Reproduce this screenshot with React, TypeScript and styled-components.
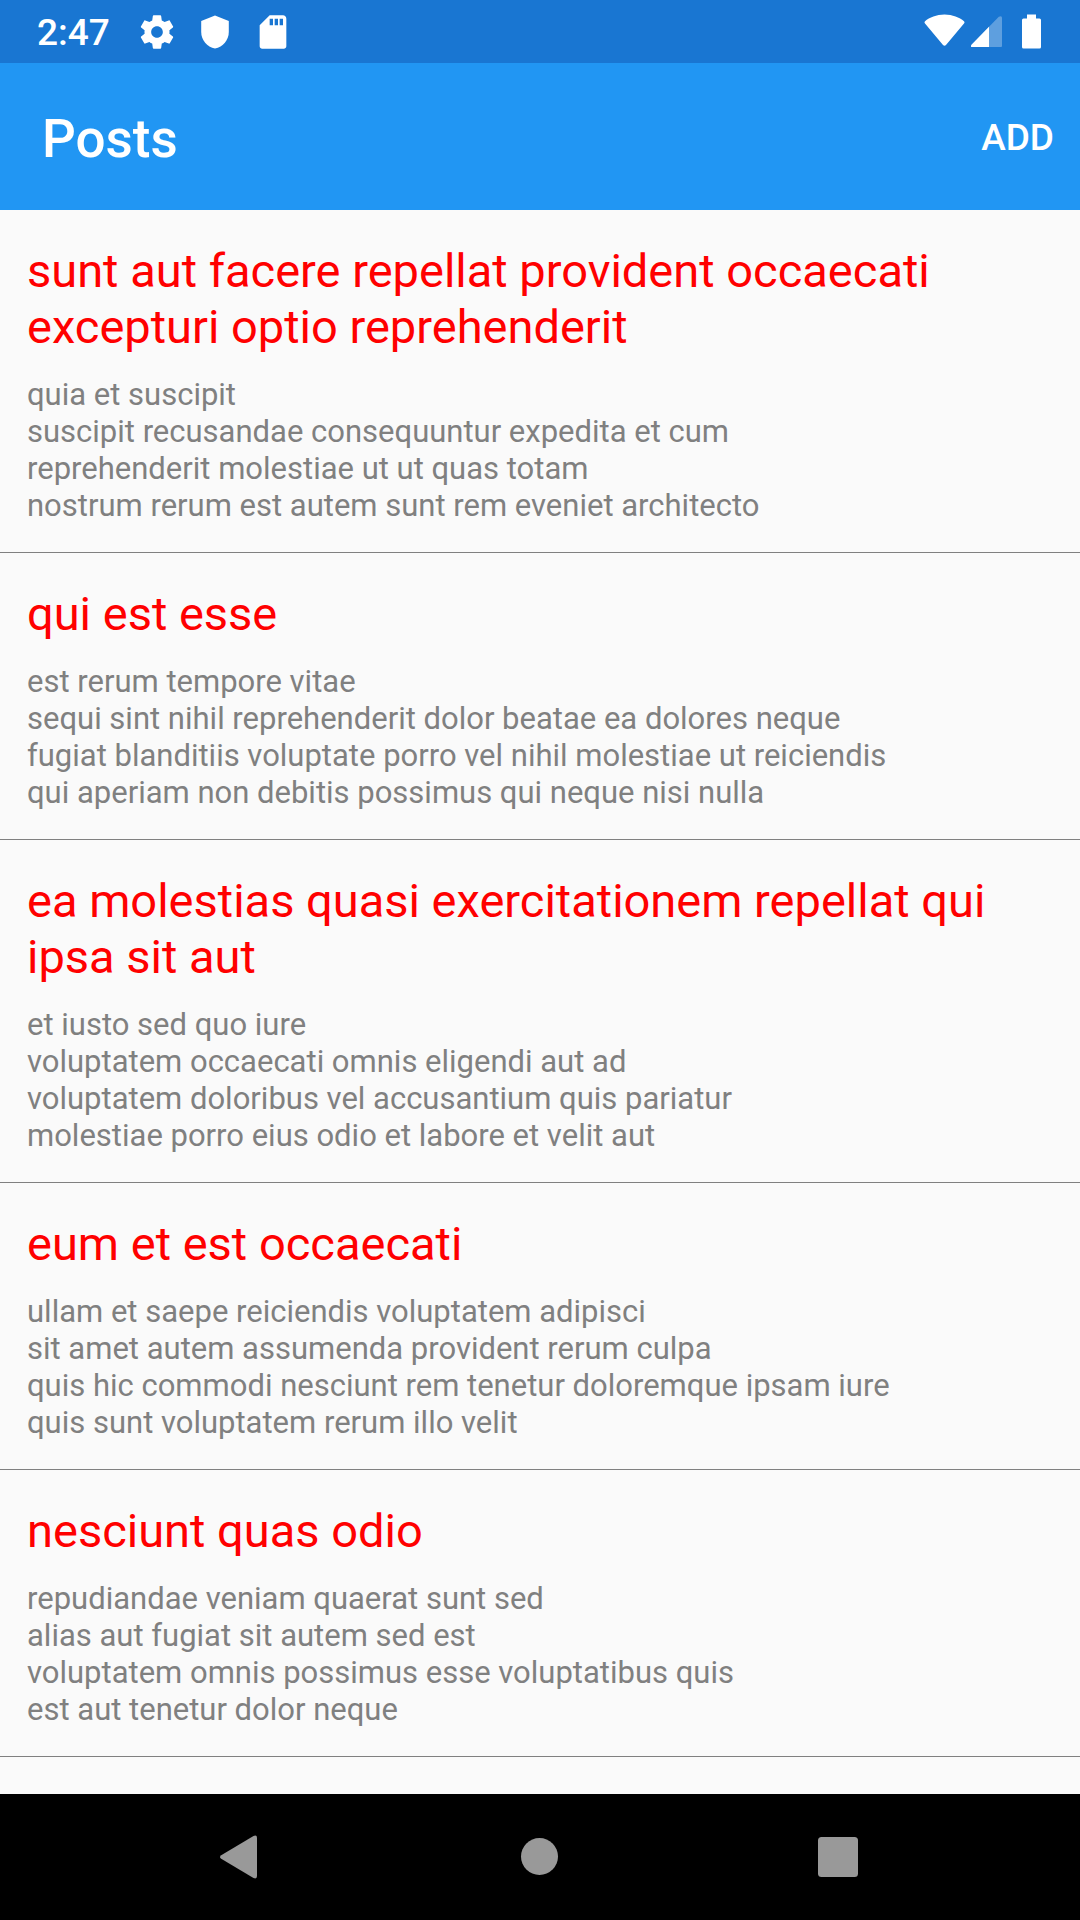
import React from "react";
import styled, { createGlobalStyle } from "styled-components";

const GlobalStyle = createGlobalStyle`
  *, *::before, *::after { box-sizing: border-box; }
  body { margin: 0; background: #fafafa; font-family: Roboto, "Liberation Sans", sans-serif; }
`;

const Screen = styled.div`
  display: flex;
  flex-direction: column;
  height: 100vh;
  overflow: hidden;
`;

const StatusBar = styled.div`
  display: flex;
  align-items: center;
  justify-content: space-between;
  flex: none;
  height: 63px;
  padding: 0 32px 0 37px;
  background: #1976d2;
  color: #fff;
`;

const StatusGroup = styled.div<{ $gap: number }>`
  display: flex;
  align-items: center;
  gap: ${(p) => p.$gap}px;
`;

const Clock = styled.time`
  margin-right: 9px;
  padding-top: 2px;
  font-size: 37px;
  font-weight: 500;
  line-height: 44px;
`;

const Icon = styled.svg`
  display: block;
  flex: none;
  fill: currentColor;
`;

const AppBar = styled.header`
  display: flex;
  align-items: center;
  justify-content: space-between;
  flex: none;
  height: 147px;
  padding: 2px 26px 0 42px;
  background: #2196f3;
  color: #fff;
`;

const Heading = styled.h1`
  margin: 0;
  padding-top: 2px;
  font-size: 53px;
  font-weight: 500;
  line-height: 62px;
`;

const AddButton = styled.button`
  padding: 0;
  border: 0;
  background: none;
  color: inherit;
  font: 500 37px/44px Roboto, "Liberation Sans", sans-serif;
  text-transform: uppercase;
`;

const PostList = styled.main`
  flex: 1;
  min-height: 0;
  overflow: hidden;
  background: #fafafa;
`;

const Post = styled.article`
  display: flex;
  flex-direction: column;
  gap: 21px;
  padding: 33px 27px 28px;
  border-bottom: 1px solid #808080;
`;

const PostTitle = styled.h2`
  margin: 0;
  color: #f00;
  font-size: 47px;
  font-weight: 400;
  line-height: 56px;
`;

const PostBody = styled.p`
  margin: 0;
  color: #808080;
  font-size: 31px;
  line-height: 37px;
  white-space: pre-line;
`;

const NavBar = styled.nav`
  display: flex;
  align-items: center;
  justify-content: center;
  gap: 216px;
  flex: none;
  height: 126px;
  background: #000;
`;

const NavButton = styled.button`
  padding: 0;
  border: 0;
  background: none;
  color: #999;
`;

const posts = [
  {
    title: "sunt aut facere repellat provident occaecati excepturi optio reprehenderit",
    body: "quia et suscipit\nsuscipit recusandae consequuntur expedita et cum\nreprehenderit molestiae ut ut quas totam\nnostrum rerum est autem sunt rem eveniet architecto",
  },
  {
    title: "qui est esse",
    body: "est rerum tempore vitae\nsequi sint nihil reprehenderit dolor beatae ea dolores neque\nfugiat blanditiis voluptate porro vel nihil molestiae ut reiciendis\nqui aperiam non debitis possimus qui neque nisi nulla",
  },
  {
    title: "ea molestias quasi exercitationem repellat qui ipsa sit aut",
    body: "et iusto sed quo iure\nvoluptatem occaecati omnis eligendi aut ad\nvoluptatem doloribus vel accusantium quis pariatur\nmolestiae porro eius odio et labore et velit aut",
  },
  {
    title: "eum et est occaecati",
    body: "ullam et saepe reiciendis voluptatem adipisci\nsit amet autem assumenda provident rerum culpa\nquis hic commodi nesciunt rem tenetur doloremque ipsam iure\nquis sunt voluptatem rerum illo velit",
  },
  {
    title: "nesciunt quas odio",
    body: "repudiandae veniam quaerat sunt sed\nalias aut fugiat sit autem sed est\nvoluptatem omnis possimus esse voluptatibus quis\nest aut tenetur dolor neque",
  },
];

export default function App() {
  return (
    <>
      <GlobalStyle />
      <Screen>
        <StatusBar>
          <StatusGroup $gap={18}>
            <Clock>2:47</Clock>
            <Icon width="40" height="40" viewBox="0 0 24 24" aria-hidden="true">
              <path d="M19.43 12.98c.04-.32.07-.64.07-.98s-.03-.66-.07-.98l2.11-1.65c.19-.15.24-.42.12-.64l-2-3.46c-.12-.22-.39-.3-.61-.22l-2.49 1c-.52-.4-1.08-.73-1.69-.98l-.38-2.65C14.46 2.18 14.25 2 14 2h-4c-.25 0-.46.18-.49.42l-.38 2.65c-.61.25-1.17.59-1.69.98l-2.49-1c-.23-.09-.49 0-.61.22l-2 3.46c-.13.22-.07.49.12.64l2.11 1.65c-.04.32-.07.65-.07.98s.03.66.07.98l-2.11 1.65c-.19.15-.24.42-.12.64l2 3.46c.12.22.39.3.61.22l2.49-1c.52.4 1.08.73 1.69.98l.38 2.65c.03.24.24.42.49.42h4c.25 0 .46-.18.49-.42l.38-2.65c.61-.25 1.17-.59 1.69-.98l2.49 1c.23.09.49 0 .61-.22l2-3.46c.12-.22.07-.49-.12-.64zM12 15.5c-1.93 0-3.5-1.57-3.5-3.5s1.57-3.5 3.5-3.5 3.5 1.57 3.5 3.5-1.57 3.5-3.5 3.5z" />
            </Icon>
            <Icon width="40" height="40" viewBox="0 0 40 40" aria-hidden="true">
              <path d="M20 3.5L33.8 9v11C33.8 28 28 35 20 36.5C12 35 6.2 28 6.2 20V9z" />
            </Icon>
            <Icon width="40" height="40" viewBox="0 0 24 24" aria-hidden="true">
              <path d="M18 2h-8L4 8v12.500c0 .8.7 1.500 1.500 1.500h13c.8 0 1.500-.7 1.500-1.500V4c0-1.100-.9-2-2-2zm-6 6h-2V4h2zm3 0h-2V4h2zm3 0h-2V4h2z" />
            </Icon>
          </StatusGroup>
          <StatusGroup $gap={6}>
            <Icon width="41" height="40" viewBox="0 0 41 40" aria-hidden="true">
              <path d="M20.5 2.5C28.5 2.5 35.5 5.5 40 9.200Q41 10 40.200 11.200L22 33Q20.500 34.500 19 33L.8 11.200Q0 10 1 9.200C5.500 5.500 12.500 2.500 20.500 2.500z" />
            </Icon>
            <Icon width="32" height="40" viewBox="1 0 32 40" aria-hidden="true">
              <path d="M1 33.200L28.800 4.800Q32 3 32 6V34Q32 35 31 35H2Q0 35 1 33.200z" opacity=".3" />
              <path d="M1 33.200L19 14.800V35H2Q0 35 1 33.200z" />
            </Icon>
            <Icon width="39" height="40" viewBox="-2.5 0 39 40" aria-hidden="true">
              <path d="M15.500 2.500h9v4H28q1.500 0 1.500 1.500V35q0 1.500-1.500 1.500H12q-1.500 0-1.500-1.500V8q0-1.500 1.500-1.500h3.500z" />
            </Icon>
          </StatusGroup>
        </StatusBar>
        <AppBar>
          <Heading>Posts</Heading>
          <AddButton type="button">Add</AddButton>
        </AppBar>
        <PostList>
          {posts.map((post) => (
            <Post key={post.title}>
              <PostTitle>{post.title}</PostTitle>
              <PostBody>{post.body}</PostBody>
            </Post>
          ))}
        </PostList>
        <NavBar aria-label="System">
          <NavButton type="button" aria-label="Back">
            <Icon width="84" height="84" viewBox="0 0 84 84">
              <path d="M23.200 40.200L55.500 21Q59 19.500 59 23V61Q59 64.500 55.500 63L23.200 43.800Q20.800 42 23.200 40.200z" />
            </Icon>
          </NavButton>
          <NavButton type="button" aria-label="Home">
            <Icon width="84" height="84" viewBox="0 0 84 84">
              <circle cx="41.500" cy="41.500" r="18.500" />
            </Icon>
          </NavButton>
          <NavButton type="button" aria-label="Overview">
            <Icon width="84" height="84" viewBox="0 0 84 84">
              <rect x="20" y="22" width="40" height="40" rx="3.500" />
            </Icon>
          </NavButton>
        </NavBar>
      </Screen>
    </>
  );
}
